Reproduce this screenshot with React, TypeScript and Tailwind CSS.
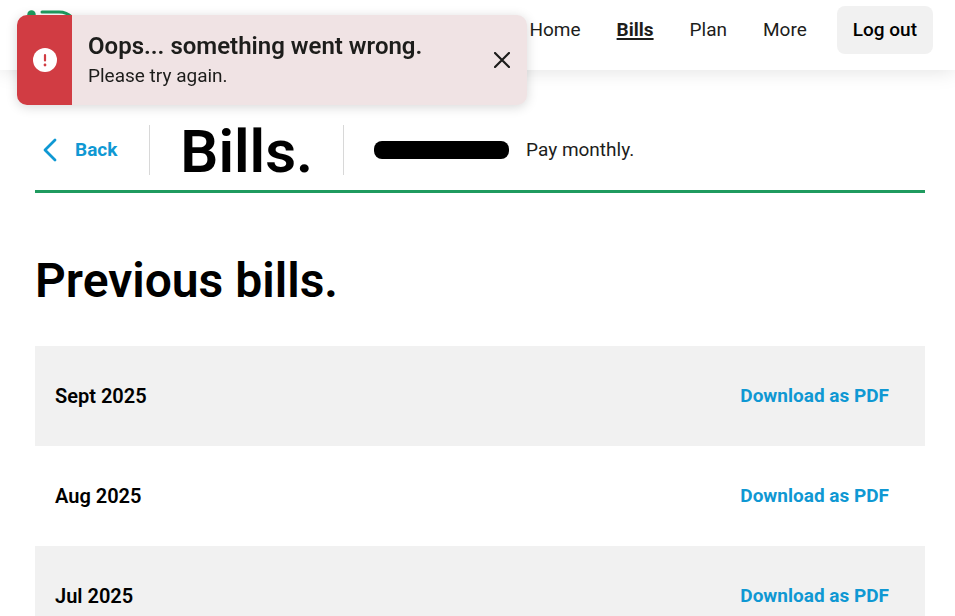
import { useState } from 'react';

const NAV_ITEMS = [
  { label: 'Home', href: '#home' },
  { label: 'Bills', href: '#bills' },
  { label: 'Plan', href: '#plan' },
  { label: 'More', href: '#more' },
];

const BILLS = ['Sept 2025', 'Aug 2025', 'Jul 2025'];

function Logo() {
  return (
    <svg viewBox="0 0 60 50" className="h-[50px] w-[60px]" fill="none" aria-hidden="true">
      <circle cx="6.5" cy="4.5" r="4.2" fill="#1f9b5f" />
      <path d="M6.5 15V42" stroke="#1f9b5f" strokeWidth="5" strokeLinecap="round" />
      <path
        d="M17 2H34C44 2 52 9 52 22S44 42 34 42H17"
        stroke="#1f9b5f"
        strokeWidth="3"
        strokeLinecap="round"
      />
    </svg>
  );
}

function Header() {
  return (
    <header className="flex h-[70px] items-start justify-between bg-white pt-[6px] pr-[22px] pl-[25px] shadow-[0_0_20px_rgba(0,0,0,0.13)]">
      <a href="#home" aria-label="Go to home" className="pt-1">
        <Logo />
      </a>
      <nav className="flex h-12 items-center">
        <ul className="flex items-center gap-9">
          {NAV_ITEMS.map(({ label, href }) => (
            <li key={label}>
              <a
                href={href}
                className={
                  label === 'Bills'
                    ? 'font-bold underline decoration-2 underline-offset-2'
                    : 'hover:underline'
                }
              >
                {label}
              </a>
            </li>
          ))}
        </ul>
        <button type="button" className="ml-[30px] h-12 rounded-lg bg-[#f1f1f1] px-4 font-medium text-black">
          Log out
        </button>
      </nav>
    </header>
  );
}

function ErrorToast({ onClose }: { onClose: () => void }) {
  return (
    <div
      role="alert"
      className="fixed top-[15px] left-[17px] z-10 flex h-[90px] w-[510px] overflow-hidden rounded-[10px] bg-[#f0e3e4] shadow-[0_2px_12px_rgba(0,0,0,0.16)]"
    >
      <div className="flex w-[55px] items-center justify-center bg-[#d13c43]">
        <svg viewBox="0 0 24 24" className="size-6" aria-hidden="true">
          <circle cx="12" cy="12" r="12" fill="#fff" />
          <path d="M12 7V12.5" stroke="#d13c43" strokeWidth="2.2" strokeLinecap="round" />
          <circle cx="12" cy="17" r="1.4" fill="#d13c43" />
        </svg>
      </div>
      <div className="flex-1 pt-4 pl-4">
        <p className="text-2xl leading-[30px] font-semibold">Oops... something went wrong.</p>
        <p className="leading-[30px]">Please try again.</p>
      </div>
      <button type="button" aria-label="Close" onClick={onClose} className="px-[17px]">
        <svg viewBox="0 0 16 16" className="size-4" aria-hidden="true">
          <path d="M1 1L15 15M15 1L1 15" stroke="#1d1d1b" strokeWidth="2.2" strokeLinecap="round" />
        </svg>
      </button>
    </div>
  );
}

export default function App() {
  const [showError, setShowError] = useState(true);

  return (
    <div className="bg-white font-['Roboto',sans-serif] text-[19px] leading-6 text-[#1d1d1b]">
      <Header />
      {showError && <ErrorToast onClose={() => setShowError(false)} />}

      <main className="pr-[30px] pb-10 pl-[35px]">
        <div className="flex h-[123px] items-end border-b-3 border-[#1f9b5f] pb-[15px]">
          <a href="#home" className="flex h-[50px] items-center pr-8 pl-2 font-bold text-[#0f98d3]">
            <svg viewBox="0 0 14 24" className="mr-[18px] h-6 w-[14px]" fill="none" aria-hidden="true">
              <path d="M12 2L2 12L12 22" stroke="currentColor" strokeWidth="2.8" strokeLinecap="round" strokeLinejoin="round" />
            </svg>
            Back
          </a>
          <h1 className="flex h-[50px] items-center border-x border-[#d8d8d8] px-[30px] pt-1 text-[60px] font-semibold text-black">
            Bills.
          </h1>
          <p className="flex h-[50px] items-center gap-[17px] pl-[30px]">
            <span className="h-[18px] w-[135px] rounded-lg bg-black" />
            Pay monthly.
          </p>
        </div>

        <h2 className="pt-[60px] pb-[37px] text-5xl leading-[56px] font-semibold text-black">Previous bills.</h2>

        <ul>
          {BILLS.map((month) => (
            <li
              key={month}
              className="flex h-[100px] items-center justify-between pr-9 pl-5 text-xl font-semibold text-black odd:bg-[#f1f1f1]"
            >
              {month}
              <a
                href="#download"
                aria-label={`Download ${month} bill as PDF`}
                className="text-[19px] font-bold text-[#0f98d3]"
              >
                Download as PDF
              </a>
            </li>
          ))}
        </ul>
      </main>
    </div>
  );
}
